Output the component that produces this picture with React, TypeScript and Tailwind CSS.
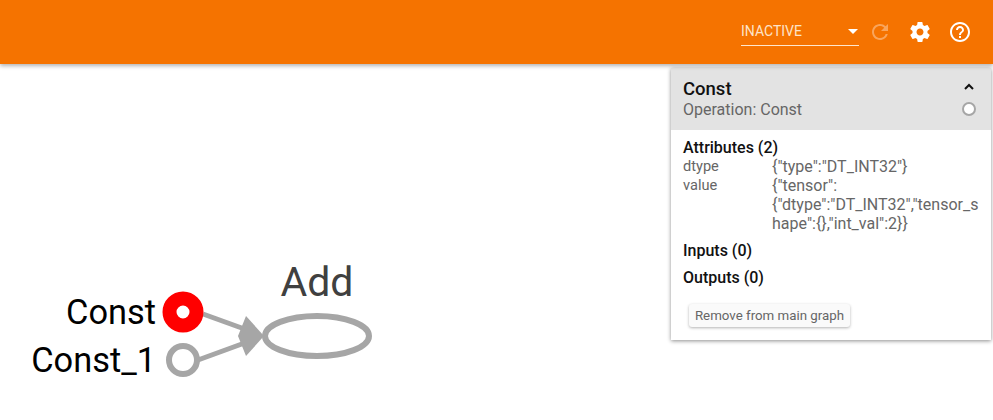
import React from "react";

const font = { fontFamily: "Roboto, 'Liberation Sans', sans-serif" };

function Graph() {
  return (
    <svg width="993" height="356" viewBox="0 64 993 356" className="block">
      <g fontFamily="Roboto, 'Liberation Sans', sans-serif">
        <text x="156" y="324" textAnchor="end" fontSize="34.4" fill="#000">Const</text>
        <text x="156" y="372" textAnchor="end" fontSize="34.4" fill="#000">Const_1</text>
        <text x="317" y="296" textAnchor="middle" fontSize="41" fill="#404040">Add</text>
      </g>
      <line x1="203" y1="314" x2="250" y2="331" stroke="#a6a6a6" strokeWidth="5" />
      <line x1="198" y1="360" x2="250" y2="341" stroke="#a6a6a6" strokeWidth="5" />
      <polygon points="264,336 246,316 238,336 246,356" fill="#a6a6a6" />
      <circle cx="183" cy="312" r="13.5" fill="#fff" stroke="#ff0000" strokeWidth="14" />
      <circle cx="183" cy="360" r="14" fill="#fff" stroke="#a6a6a6" strokeWidth="6" />
      <ellipse cx="317" cy="336" rx="52" ry="20" fill="#fff" stroke="#a6a6a6" strokeWidth="6" />
    </svg>
  );
}

export default function App() {
  return (
    <div className="relative w-[993px] h-[420px] bg-white overflow-hidden" style={font}>
      <header className="relative z-10 h-16 bg-[#f57300] flex items-center justify-end pr-[21px] shadow-[0_2px_4px_rgba(0,0,0,0.3)]">
        <div className="w-[118px] h-[30px] mt-[-2px] mr-[9px] flex items-center justify-between border-b border-[#ffe6cc] text-white">
          <span className="text-[14px] leading-none text-[#fde3c8] mt-[1px]">INACTIVE</span>
          <span className="mr-[1px] mt-[1px] w-0 h-0 border-x-[5px] border-x-transparent border-t-[5px] border-t-white" />
        </div>
        <svg width="24" height="24" viewBox="0 0 24 24" className="mr-[16px]" fill="#f9a55c">
          <path d="M17.65 6.35A7.958 7.958 0 0 0 12 4c-4.42 0-7.99 3.58-7.99 8s3.57 8 7.99 8c3.73 0 6.84-2.55 7.73-6h-2.08A5.99 5.99 0 0 1 12 18c-3.31 0-6-2.69-6-6s2.69-6 6-6c1.66 0 3.14.69 4.22 1.78L13 11h7V4l-2.35 2.35z" />
        </svg>
        <svg width="24" height="24" viewBox="0 0 24 24" className="mr-[16px]" fill="#fff">
          <path d="M19.43 12.98c.04-.32.07-.64.07-.98s-.03-.66-.07-.98l2.11-1.65c.19-.15.24-.42.12-.64l-2-3.46c-.12-.22-.39-.3-.61-.22l-2.49 1c-.52-.4-1.08-.73-1.69-.98l-.38-2.65A.488.488 0 0 0 14 2h-4c-.25 0-.46.18-.49.42l-.38 2.65c-.61.25-1.17.59-1.69.98l-2.49-1c-.23-.09-.49 0-.61.22l-2 3.46c-.13.22-.07.49.12.64l2.11 1.65c-.04.32-.07.65-.07.98s.03.66.07.98l-2.11 1.65c-.19.15-.24.42-.12.64l2 3.46c.12.22.39.3.61.22l2.49-1c.52.4 1.08.73 1.69.98l.38 2.65c.03.24.24.42.49.42h4c.25 0 .46-.18.49-.42l.38-2.65c.61-.25 1.17-.59 1.69-.98l2.49 1c.23.09.49 0 .61-.22l2-3.46c.12-.22.07-.49-.12-.64l-2.11-1.65zM12 15.5c-1.93 0-3.5-1.57-3.5-3.5s1.57-3.5 3.5-3.5 3.5 1.57 3.5 3.5-1.57 3.5-3.5 3.5z" />
        </svg>
        <svg width="24" height="24" viewBox="0 0 24 24" fill="#fff">
          <path d="M11 18h2v-2h-2v2zm1-16C6.48 2 2 6.48 2 12s4.48 10 10 10 10-4.48 10-10S17.52 2 12 2zm0 18c-4.41 0-8-3.59-8-8s3.59-8 8-8 8 3.59 8 8-3.59 8-8 8zm0-14c-2.21 0-4 1.79-4 4h2c0-1.1.9-2 2-2s2 .9 2 2c0 2-3 1.75-3 5h2c0-2.25 3-2.5 3-5 0-2.21-1.79-4-4-4z" />
        </svg>
      </header>

      <Graph />

      <aside className="absolute left-[671px] top-[68px] w-[320px] h-[272px] bg-white shadow-[0_1px_4px_rgba(0,0,0,0.45)]">
        <div className="h-[62px] bg-[#e3e3e3] pl-3 pr-[15px] pt-[10px] flex justify-between">
          <div>
            <div className="text-[18.5px] leading-[21px] font-medium text-[#111] translate-y-[1px]">Const</div>
            <div className="text-[16px] leading-[21px] text-[#666]">Operation: Const</div>
          </div>
          <div className="flex flex-col items-end">
            <svg width="16" height="16" viewBox="0 0 16 16" className="mr-[-1px] mt-[1px]" fill="none" stroke="#111" strokeWidth="2">
              <path d="M4 10 L8 6 L12 10" />
            </svg>
            <span className="mt-[7px] w-[14px] h-[14px] rounded-full bg-white border-2 border-[#a6a6a6]" />
          </div>
        </div>
        <div className="pl-3 pr-2 pt-[9px]">
          <div className="text-[16px] leading-[18px] font-medium text-[#111]">Attributes (2)</div>
          <div className="flex leading-[19px] text-[#666]">
            <div className="w-[89px] shrink-0 text-[14.6px]">
              <div>dtype</div>
              <div>value</div>
            </div>
            <div className="min-w-0 w-[212px] text-[16px]">
              <div>{'{"type":"DT_INT32"}'}</div>
              <div>{'{"tensor":'}</div>
              <div>{'{"dtype":"DT_INT32","tensor_s'}</div>
              <div>{'hape":{},"int_val":2}}'}</div>
            </div>
          </div>
          <div className="mt-[9px] text-[16px] leading-[18px] font-medium text-[#111]">Inputs (0)</div>
          <div className="mt-[9px] text-[16px] leading-[18px] font-medium text-[#111]">Outputs (0)</div>
          <button className="mt-[17px] ml-[6px] h-[23px] w-[161px] rounded-[3px] bg-[#fafafa] text-[13.3px] leading-none text-[#666] shadow-[0_1px_3px_rgba(0,0,0,0.3)]">
            Remove from main graph
          </button>
        </div>
      </aside>
    </div>
  );
}
